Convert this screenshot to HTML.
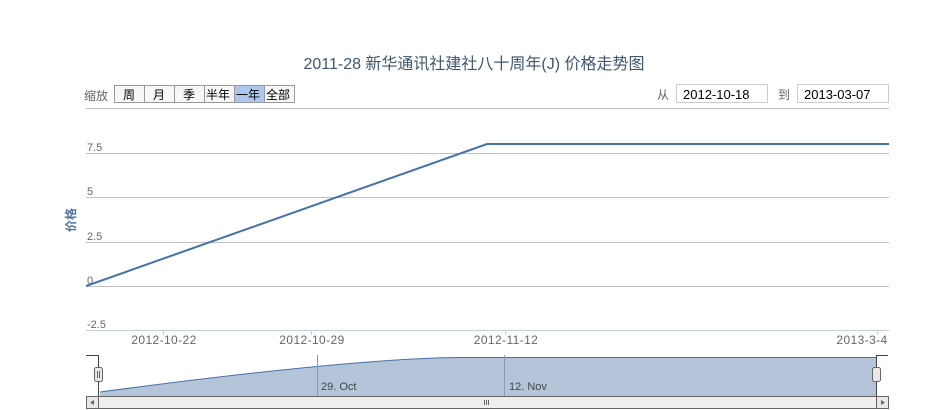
<!DOCTYPE html>
<html><head><meta charset="utf-8"><style>
html,body{margin:0;padding:0;background:#fff;}
svg{display:block;font-family:"Liberation Sans","Noto Sans CJK SC",sans-serif;}
</style></head><body>
<svg width="929" height="410" viewBox="0 0 929 410" xmlns="http://www.w3.org/2000/svg">
<text x="474" y="69" text-anchor="middle" font-size="16" fill="#3e576f">2011-28 新华通讯社建社八十周年(J) 价格走势图</text>
<text x="84" y="100" font-size="12" fill="#666">缩放</text>
<g font-size="12" fill="#000">
<rect x="114.5" y="85.5" width="180" height="17" fill="#f7f7f7" stroke="#999"/>
<rect x="234.5" y="85.5" width="30" height="17" fill="#acc8ec" stroke="#999"/>
<line x1="144.5" y1="85" x2="144.5" y2="103" stroke="#999"/>
<line x1="174.5" y1="85" x2="174.5" y2="103" stroke="#999"/>
<line x1="204.5" y1="85" x2="204.5" y2="103" stroke="#999"/>
<line x1="264.5" y1="85" x2="264.5" y2="103" stroke="#999"/>
<text x="123" y="99">周</text><text x="153" y="99">月</text><text x="183" y="99">季</text>
<text x="206" y="99">半年</text><text x="236" y="99">一年</text><text x="266" y="99">全部</text>
</g>
<text x="657" y="99" font-size="12" fill="#666">从</text>
<rect x="676.5" y="84.5" width="91" height="18" fill="#fff" stroke="#ccc"/>
<text x="683" y="99" font-size="13" fill="#000">2012-10-18</text>
<text x="778" y="99" font-size="12" fill="#666">到</text>
<rect x="797.5" y="84.5" width="91" height="18" fill="#fff" stroke="#ccc"/>
<text x="804" y="99" font-size="13" fill="#000">2013-03-07</text>
<line x1="86" y1="108.5" x2="889" y2="108.5" stroke="#c0c0c0"/>
<g stroke="#c0c0c0">
<line x1="86" y1="153.5" x2="889" y2="153.5"/>
<line x1="86" y1="197.5" x2="889" y2="197.5"/>
<line x1="86" y1="242.5" x2="889" y2="242.5"/>
<line x1="86" y1="286.5" x2="889" y2="286.5"/>
</g>
<line x1="86" y1="330.5" x2="889" y2="330.5" stroke="#c0d0e0"/>
<g font-size="11" fill="#666">
<text x="87" y="151">7.5</text><text x="87" y="195">5</text><text x="87" y="240">2.5</text>
<text x="87" y="284">0</text><text x="87" y="328">-2.5</text>
</g>
<text transform="translate(75,220) rotate(-90)" text-anchor="middle" font-size="12" font-weight="bold" fill="#4d759e">价格</text>
<g stroke="#c0d0e0"><line x1="163.5" y1="330" x2="163.5" y2="335"/><line x1="311.5" y1="330" x2="311.5" y2="335"/><line x1="505.5" y1="330" x2="505.5" y2="335"/><line x1="877.5" y1="330" x2="877.5" y2="335"/></g>
<g font-size="12" fill="#666" text-anchor="middle" letter-spacing="0.4">
<text x="164" y="344">2012-10-22</text><text x="312" y="344">2012-10-29</text><text x="506" y="344">2012-11-12</text><text x="862" y="344">2013-3-4</text>
</g>
<polyline points="86,286 487,144 889,144" fill="none" stroke="#4572a7" stroke-width="2"/>
<path d="M100,392 C250,372 380,358 460,357.5 L876,357.5 L876,396 L100,396 Z" fill="#b4c5da"/>
<path d="M100,392 C250,372 380,358 460,357.5 L876,357.5" fill="none" stroke="#4572a7" stroke-width="1"/>
<line x1="317.5" y1="355" x2="317.5" y2="396" stroke="#8a9ab0"/>
<line x1="504.5" y1="355" x2="504.5" y2="396" stroke="#8a9ab0"/>
<text x="321" y="390" font-size="11" fill="#444">29. Oct</text>
<text x="509" y="390" font-size="11" fill="#444">12. Nov</text>
<path d="M86,355.5 H98.5 V396 M888,355.5 H876.5 V396" fill="none" stroke="#444"/>
<rect x="94.5" y="367.5" width="8" height="14" rx="2" fill="#ebe7e8" stroke="#666"/>
<line x1="97.5" y1="371" x2="97.5" y2="378" stroke="#666"/><line x1="99.5" y1="371" x2="99.5" y2="378" stroke="#666"/>
<rect x="872.5" y="367.5" width="8" height="14" rx="2" fill="#ebe7e8" stroke="#666"/>
<rect x="86.5" y="396.5" width="802" height="12" fill="#eee" stroke="#666"/>
<rect x="86.5" y="396.5" width="12" height="12" fill="#ebe7e8" stroke="#666"/>
<rect x="876.5" y="396.5" width="12" height="12" fill="#ebe7e8" stroke="#666"/>
<path d="M94,400 L90,402.5 L94,405 Z" fill="#666"/>
<path d="M881,400 L885,402.5 L881,405 Z" fill="#666"/>
<g stroke="#666"><line x1="484.5" y1="400" x2="484.5" y2="405"/><line x1="486.5" y1="400" x2="486.5" y2="405"/><line x1="488.5" y1="400" x2="488.5" y2="405"/></g>
</svg>
</body></html>
